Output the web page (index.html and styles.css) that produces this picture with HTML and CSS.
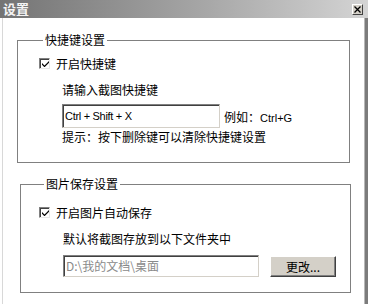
FILE: index.html
```html
<!DOCTYPE html>
<html lang="zh-CN">
<head>
  <meta charset="UTF-8" />
  <title>设置</title>
  <link rel="stylesheet" href="styles.css">
</head>
<body>
  <div class="window">
    <div class="titlebar">
      <span class="title">设置</span>
      <button class="close-button" type="button" aria-label="关闭">
        <svg width="7" height="7" viewBox="0 0 7 7" aria-hidden="true">
          <path d="M0.5 0.5 L6.5 6.5 M6.5 0.5 L0.5 6.5" stroke="#000" stroke-width="1.3" fill="none"/>
        </svg>
      </button>
    </div>

    <div class="window-body">
      <div class="client">
        <fieldset class="group group-hotkey">
          <legend>快捷键设置</legend>
          <label class="check-row">
            <span class="checkbox checked" aria-hidden="true">
              <svg width="7" height="7" viewBox="0 0 7 7"><path d="M0 3 L2.5 5.5 L7 1 L7 2.8 L2.5 7.3 L0 4.8 Z" fill="#000"/></svg>
            </span>
            开启快捷键
          </label>
          <div class="sub">
            <p class="text">请输入截图快捷键</p>
            <div class="input-row">
              <div class="textbox hotkey-box">Ctrl + Shift + X</div>
              <span class="example">例如<span class="colon">：</span><span class="latin">Ctrl+G</span></span>
            </div>
            <p class="text hint">提示<span class="colon">：</span>按下删除键可以清除快捷键设置</p>
          </div>
        </fieldset>

        <fieldset class="group group-save">
          <legend>图片保存设置</legend>
          <label class="check-row">
            <span class="checkbox checked" aria-hidden="true">
              <svg width="7" height="7" viewBox="0 0 7 7"><path d="M0 3 L2.5 5.5 L7 1 L7 2.8 L2.5 7.3 L0 4.8 Z" fill="#000"/></svg>
            </span>
            开启图片自动保存
          </label>
          <div class="sub">
            <p class="text">默认将截图存放到以下文件夹中</p>
            <div class="input-row path-row">
              <div class="textbox path-box">D:\我的文档\桌面</div>
              <button class="change-button" type="button">更改...</button>
            </div>
          </div>
        </fieldset>
      </div>
      <div class="edge"></div>
    </div>
  </div>
</body>
</html>
```

FILE: styles.css
```css
* {
  box-sizing: border-box;
}

body {
  margin: 0;
  width: 368px;
  height: 304px;
  overflow: hidden;
  background-color: white;
  font-family: "Liberation Sans", "Noto Sans CJK SC", sans-serif;
  font-size: 12px;
  color: #000;
}

.window {
  display: flex;
  flex-direction: column;
  height: 304px;
}

.titlebar {
  height: 18px;
  display: flex;
  align-items: center;
  justify-content: space-between;
  padding: 0 5px 0 3px;
  background: linear-gradient(to right, #747474, #a6a6a6 55%, #d4d4d4);
}

.title {
  color: #f4f4f4;
  font-family: "Noto Sans CJK SC", sans-serif;
  font-weight: 700;
  font-size: 13px;
  line-height: 18px;
}

.close-button {
  width: 11px;
  height: 11px;
  padding: 0;
  display: flex;
  align-items: center;
  justify-content: center;
  background-color: #d4d0c8;
  border: 1px solid;
  border-color: #fff #404040 #404040 #fff;
}

.window-body {
  flex: 1;
  display: flex;
}

.client {
  flex: 1;
  margin-left: 2px;
  border-left: 1px solid #d8d8d8;
}

.edge {
  width: 4px;
  background-color: #7c7c7c;
  border-left: 1px solid #b8b8b8;
}

.group {
  margin: 0;
  padding: 0 0 0 21px;
  border: 1px solid #808080;
  min-width: 0;
}

.group legend {
  padding: 0 2px;
  margin-left: 4px;
  line-height: 14px;
  font-family: "Noto Sans CJK SC", sans-serif;
}

.group-hotkey {
  margin: 15px 0 0 14px;
  width: 333px;
  padding-bottom: 18px;
}

.group-save {
  margin: 14px 0 0 17px;
  width: 331px;
  padding-left: 18px;
  padding-bottom: 15px;
}

.group-save legend {
  margin-left: 5px;
}

.check-row {
  display: flex;
  align-items: center;
  gap: 6px;
  height: 14px;
  margin-top: 9px;
  font-family: "Noto Sans CJK SC", sans-serif;
}

.group-save .check-row {
  margin-top: 14px;
}

.checkbox {
  width: 11px;
  height: 11px;
  display: flex;
  align-items: center;
  justify-content: center;
  background-color: white;
  border: 1px solid;
  border-color: #808080 #e8e8e8 #e8e8e8 #808080;
  box-shadow: inset 1px 1px 0 #404040;
  padding: 1px 0 0 1px;
}

.sub {
  padding-left: 23px;
}

.group-save .sub {
  padding-left: 24px;
}

.text {
  margin: 13px 0 0 0;
  line-height: 14px;
  font-family: "Noto Sans CJK SC", sans-serif;
}

.hint {
  margin-top: 2px;
}

/* 全角冒号居中显示 */
.colon {
  font-family: "Noto Sans CJK TC", sans-serif;
}

.input-row {
  display: flex;
  align-items: center;
  gap: 4px;
  margin-top: 7px;
}

.path-row {
  margin-top: 8px;
  gap: 11px;
}

.textbox {
  height: 24px;
  padding: 0 2px;
  display: flex;
  align-items: center;
  background-color: white;
  border: 1px solid;
  border-color: #808080 #d4d0c8 #d4d0c8 #808080;
  box-shadow: inset 1px 1px 0 #404040;
  font-size: 11px;
  white-space: nowrap;
}

.hotkey-box {
  width: 158px;
  letter-spacing: -0.3px;
}

.path-box {
  width: 196px;
  height: 22px;
  color: #8a8a8a;
  font-family: "Noto Sans CJK SC", sans-serif;
  font-size: 12px;
}

.example {
  font-family: "Noto Sans CJK SC", sans-serif;
}

.example .latin {
  font-family: "Liberation Sans", sans-serif;
  font-size: 11px;
}

.change-button {
  width: 66px;
  height: 21px;
  margin-top: 2px;
  padding: 0;
  background-color: #d4d0c8;
  border: 1px solid;
  border-color: #fff #404040 #404040 #fff;
  box-shadow: inset -1px -1px 0 #808080;
  font-family: "Noto Sans CJK SC", sans-serif;
  font-size: 12px;
  color: #000;
}
```
